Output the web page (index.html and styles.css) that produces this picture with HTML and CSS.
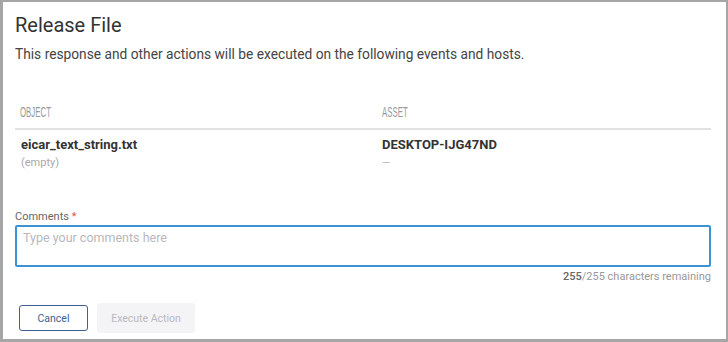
FILE: index.html
```html
<!DOCTYPE html>
<html>
<head>
<meta charset="utf-8">
<link rel="stylesheet" href="styles.css">
</head>
<body>
<div class="frame">
  <div class="panel">
    <h1 class="title">Release File</h1>
    <p class="subtitle">This response and other actions will be executed on the following events and hosts.</p>
    <div class="table">
      <div class="th"><span class="cond">OBJECT</span></div>
      <div class="th th2"><span class="cond">ASSET</span></div>
      <div class="td">
        <div class="main">eicar_text_string.txt</div>
        <div class="sub">(empty)</div>
      </div>
      <div class="td td2">
        <div class="main">DESKTOP-IJG47ND</div>
        <div class="sub dash">—</div>
      </div>
    </div>
    <label class="label">Comments <span class="req">*</span></label>
    <div class="textarea">Type your comments here</div>
    <div class="counter"><span class="count">255</span>/255 characters remaining</div>
    <div class="actions">
      <button class="btn btn-cancel">Cancel</button>
      <button class="btn btn-exec">Execute Action</button>
    </div>
  </div>
</div>
</body>
</html>
```
FILE: styles.css
```css
html, body {
  margin: 0;
  padding: 0;
}
body {
  background: #a6a6a6;
  font-family: Roboto, "Liberation Sans", sans-serif;
  width: 728px;
  height: 342px;
  overflow: hidden;
}
.frame {
  padding: 2px 2px 3px 3px;
  height: 342px;
  box-sizing: border-box;
}
.panel {
  background: #ffffff;
  height: 100%;
  box-sizing: border-box;
  padding: 11px 15px 0 12px;
  display: flex;
  flex-direction: column;
}
.title {
  margin: 0;
  font-size: 20px;
  line-height: 24px;
  font-weight: 400;
  color: #333;
}
.subtitle {
  margin: 7px 0 0 0;
  font-size: 13.75px;
  line-height: 20px;
  color: #444;
}
.table {
  margin-top: 40px;
  display: grid;
  grid-template-columns: 362px 1fr;
}
.th {
  padding: 0 0 0 5px;
  height: 24px;
  border-bottom: 2px solid #e2e2e4;
  line-height: 16px;
  overflow: hidden;
}
.th2 {
  padding-left: 5px;
}
.cond {
  display: inline-block;
  font-family: "Liberation Sans", sans-serif;
  font-size: 14px;
  color: #969aa0;
  transform: scaleX(0.56);
  transform-origin: left center;
}
.td {
  padding: 6px 0 0 6px;
  height: 57px;
  box-sizing: border-box;
}
.td2 {
  padding-left: 5px;
}
.main {
  font-size: 13px;
  line-height: 18px;
  font-weight: 700;
  color: #333;
}
.sub {
  font-size: 11px;
  line-height: 18px;
  color: #aaa;
}
.dash {
  color: #bbb;
}
.label {
  margin-top: 22px;
  font-size: 11px;
  line-height: 16px;
  color: #666;
}
.req {
  color: #d9534f;
}
.textarea {
  margin-top: 0;
  height: 42px;
  box-sizing: border-box;
  border: 2px solid #3b93d4;
  border-radius: 2px;
  padding: 3px 6px;
  font-size: 12.5px;
  line-height: 16px;
  color: #b8b8bc;
}
.counter {
  margin-top: 2px;
  text-align: right;
  font-size: 11px;
  line-height: 16px;
  color: #999;
}
.count {
  color: #666;
  font-weight: 500;
}
.actions {
  margin-top: 18px;
  display: flex;
  align-items: center;
  gap: 9px;
  padding-left: 4px;
}
.btn {
  font-family: Roboto, "Liberation Sans", sans-serif;
  font-size: 10.5px;
  border-radius: 3px;
  cursor: pointer;
}
.btn-cancel {
  width: 69px;
  height: 26px;
  background: #fff;
  border: 1px solid #3e5f90;
  color: #3e5f90;
}
.btn-exec {
  width: 98px;
  height: 30px;
  background: #f4f4f6;
  border: none;
  color: #b9b9c0;
}
```
